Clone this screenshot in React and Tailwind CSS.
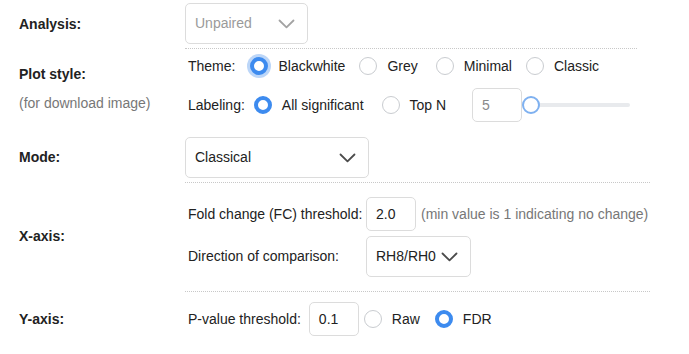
import React from "react";

function Chevron({ muted }) {
  return (
    <svg width="17" height="10" viewBox="0 0 17 10" fill="none">
      <path
        d="M1.5 1.5 L8.5 8.3 L15.5 1.5"
        stroke={muted ? "#a3a3a3" : "#4b4b4b"}
        strokeWidth="1.8"
        strokeLinecap="round"
        strokeLinejoin="round"
      />
    </svg>
  );
}

function Select({ value, width, muted }) {
  return (
    <div
      className={`${width} h-[41px] flex items-center justify-between pl-[9px] pr-[12px] border border-[#dcdcdc] rounded-[5px] bg-white`}
    >
      <span className={muted ? "text-[#9a9a9a]" : "text-[#222]"}>{value}</span>
      <Chevron muted={muted} />
    </div>
  );
}

function Input({ value, muted }) {
  return (
    <div className="w-[50px] h-[34px] flex items-center pl-[9px] border border-[#dcdcdc] rounded-[5px] bg-white">
      <span className={muted ? "text-[#8a8a8a]" : "text-[#222]"}>{value}</span>
    </div>
  );
}

function Radio({ checked, focus, label, className = "" }) {
  return (
    <div className={`flex items-center ${className}`}>
      {checked ? (
        <span
          className={`w-[18px] h-[18px] rounded-full border-[4px] border-[#3d8bef] bg-white ${
            focus ? "ring-[3px] ring-[#bcd6f8]" : ""
          }`}
        />
      ) : (
        <span className="w-[18px] h-[18px] rounded-full border-[1.5px] border-[#c9ccd0] bg-white" />
      )}
      <span className="ml-[10px]">{label}</span>
    </div>
  );
}

export default function App() {
  return (
    <div
      className="w-[689px] h-[354px] bg-white text-[14px] text-[#222] overflow-hidden"
      style={{ fontFamily: '"Liberation Sans", Arial, sans-serif' }}
    >
      {/* Analysis */}
      <div className="flex h-[48px]">
        <div className="w-[185px] pl-[19px] flex items-center font-bold pt-[1px]">Analysis:</div>
        <div className="pt-[3px]">
          <Select value="Unpaired" width="w-[123px]" muted />
        </div>
      </div>

      {/* Plot style */}
      <div className="flex">
        <div className="w-[185px] pl-[19px] flex flex-col justify-center">
          <div className="font-bold">Plot style:</div>
          <div className="mt-[8px] text-[#777]">(for download image)</div>
        </div>
        <div className="w-[452px] border-t border-dotted border-[#c8c8c8] pb-[8px]">
          <div className="h-[34px] flex items-center pl-[3px]">
            <span className="mr-[15px]">Theme:</span>
            <Radio checked focus label="Blackwhite" className="mr-[14px]" />
            <Radio label="Grey" className="mr-[18px]" />
            <Radio label="Minimal" className="mr-[14px]" />
            <Radio label="Classic" />
          </div>
          <div className="h-[34px] mt-[5px] flex items-center pl-[3px]">
            <span className="mr-[9px]">Labeling:</span>
            <Radio checked label="All significant" className="mr-[18px]" />
            <Radio label="Top N" className="mr-[26px]" />
            <Input value="5" muted />
            <div className="relative w-[108px] h-[18px] flex items-center">
              <div className="w-full h-[4px] rounded-full bg-[#e8eaed]" />
              <span className="absolute left-0 top-0 w-[18px] h-[18px] rounded-full border-[2px] border-[#7fb1f0] bg-white" />
            </div>
          </div>
        </div>
      </div>

      {/* Mode */}
      <div className="flex h-[52px]">
        <div className="w-[185px] pl-[19px] flex items-center font-bold pt-[2px]">Mode:</div>
        <div className="pt-[7px]">
          <Select value="Classical" width="w-[184px]" />
        </div>
      </div>

      {/* X-axis */}
      <div className="flex">
        <div className="w-[185px] pl-[19px] flex items-center font-bold">X-axis:</div>
        <div className="w-[465px] border-t border-dotted border-[#c8c8c8] pt-[14px] pb-[14px] pl-[3px]">
          <div className="flex items-center h-[34px]">
            <span className="w-[178px]">Fold change (FC) threshold:</span>
            <Input value="2.0" />
            <span className="ml-[5px] text-[#777]">(min value is 1 indicating no change)</span>
          </div>
          <div className="flex items-center mt-[5px]">
            <span className="w-[178px]">Direction of comparison:</span>
            <Select value="RH8/RH0" width="w-[105px]" />
          </div>
        </div>
      </div>

      {/* Y-axis */}
      <div className="flex">
        <div className="w-[185px] pl-[19px] flex items-center font-bold pt-[12px]">Y-axis:</div>
        <div className="w-[465px] border-t border-dotted border-[#c8c8c8] pt-[10px] pl-[3px]">
          <div className="flex items-center h-[34px]">
            <span className="mr-[8px]">P-value threshold:</span>
            <Input value="0.1" />
            <Radio label="Raw" className="ml-[5px] mr-[15px]" />
            <Radio checked label="FDR" />
          </div>
        </div>
      </div>
    </div>
  );
}
